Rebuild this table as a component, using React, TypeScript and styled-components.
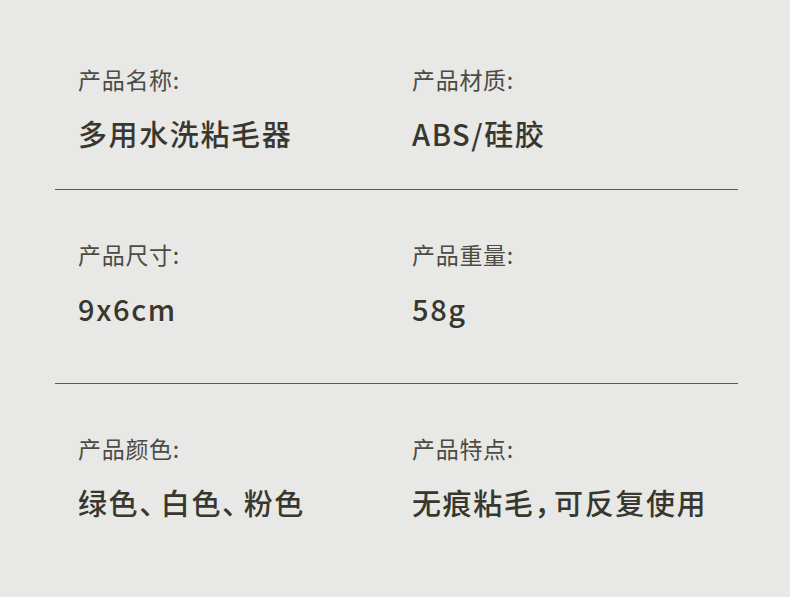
import React from 'react';
import styled, { createGlobalStyle } from 'styled-components';

const GlobalStyle = createGlobalStyle`
  html, body {
    margin: 0;
    padding: 0;
    background: #e8e8e6;
  }
  body {
    font-family: "Noto Sans CJK SC", "Noto Sans", sans-serif;
  }
`;

const StyledPage = styled.div`
  width: 790px;
  height: 597px;
  background: #e8e8e6;
  padding: 0 52px 0 55px;
  box-sizing: border-box;
  overflow: hidden;
`;

const StyledSection = styled.div<{ first?: boolean; last?: boolean }>`
  display: grid;
  grid-template-columns: 334px 1fr;
  padding: ${({ first }) => (first ? '64px 0 36px 23px' : '49px 0 55px 23px')};
  border-bottom: ${({ last }) => (last ? 'none' : '1px solid #5a5a58')};
`;

const StyledItem = styled.div`
  display: flex;
  flex-direction: column;
  gap: 19px;
`;

const StyledLabel = styled.div`
  font-size: 23px;
  line-height: 30px;
  font-weight: 400;
  letter-spacing: 0.7px;
  color: #4c4b43;
`;

const StyledValue = styled.div`
  font-size: 29px;
  line-height: 40px;
  font-weight: 500;
  letter-spacing: 1.6px;
  color: #38372e;
  white-space: nowrap;
`;

// punctuation in the values is set tighter than a full em
const StyledPunct = styled.span<{ pull: number }>`
  letter-spacing: ${({ pull }) => 1.6 - pull}px;
`;

const punctPull: Record<string, number> = { '、': 9, '，': 11 };

const renderValue = (value: string) =>
  Array.from(value).map((ch, i) =>
    punctPull[ch] ? (
      <StyledPunct key={i} pull={punctPull[ch]}>
        {ch}
      </StyledPunct>
    ) : (
      ch
    )
  );

const rows = [
  [
    { label: '产品名称:', value: '多用水洗粘毛器' },
    { label: '产品材质:', value: 'ABS/硅胶' },
  ],
  [
    { label: '产品尺寸:', value: '9x6cm' },
    { label: '产品重量:', value: '58g' },
  ],
  [
    { label: '产品颜色:', value: '绿色、白色、粉色' },
    { label: '产品特点:', value: '无痕粘毛，可反复使用' },
  ],
];

const App = () => {
  return (
    <>
      <GlobalStyle />
      <StyledPage>
        {rows.map((row, i) => (
          <StyledSection key={i} first={i === 0} last={i === rows.length - 1}>
            {row.map((item) => (
              <StyledItem key={item.label}>
                <StyledLabel>{item.label}</StyledLabel>
                <StyledValue>{renderValue(item.value)}</StyledValue>
              </StyledItem>
            ))}
          </StyledSection>
        ))}
      </StyledPage>
    </>
  );
};

export default App;
